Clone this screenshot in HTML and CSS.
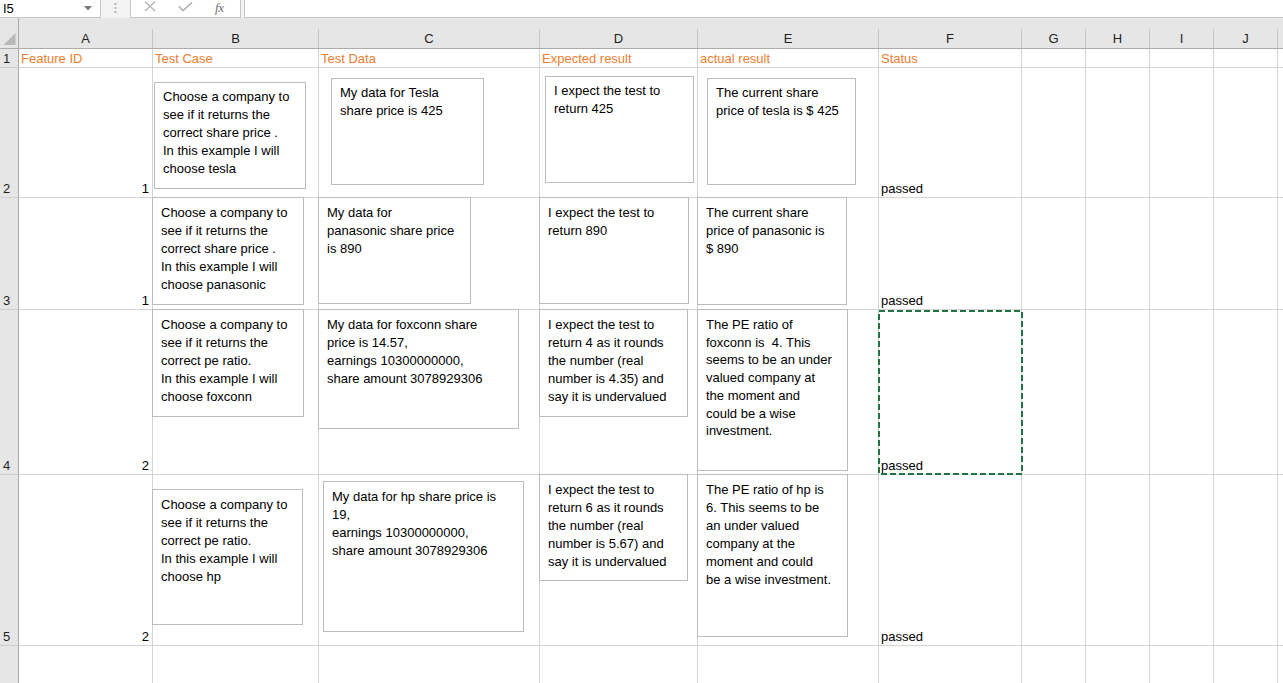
FILE: index.html
```html
<!DOCTYPE html>
<html lang="en">
<head>
<meta charset="utf-8">
<title>Test cases</title>
<link rel="stylesheet" href="styles.css">
</head>
<body>
<div class="app">
  <div class="fbar">
    <div class="namebox">
      <span>I5</span>
      <svg class="dd" width="8" height="5" viewBox="0 0 8 5"><path d="M0 0H8L4 4.5Z" fill="#7a7a7a"/></svg>
    </div>
    <div class="grip">
      <svg width="3" height="11" viewBox="0 0 3 11"><rect x="0.5" y="1" width="2" height="2" fill="#b5b5b5"/><rect x="0.5" y="5" width="2" height="2" fill="#b5b5b5"/><rect x="0.5" y="9" width="2" height="2" fill="#b5b5b5"/></svg>
    </div>
    <div class="fxbox">
      <svg class="ic-x" width="12" height="11" viewBox="0 0 12 11"><path d="M1 0.5L11 10M11 0.5L1 10" stroke="#b3b3b3" stroke-width="1.3" fill="none"/></svg>
      <svg class="ic-ok" width="15" height="10" viewBox="0 0 15 10"><path d="M0.8 4.2L5 8.6L14 0.6" stroke="#b3b3b3" stroke-width="1.6" fill="none"/></svg>
      <span class="fx">fx</span>
    </div>
    <div class="finput"></div>
  </div>

  <div class="sheet">
    <div class="corner"><svg width="19" height="30" viewBox="0 0 19 30"><path d="M15.5 15V27H3.5Z" fill="#b8b8b8"/></svg></div>
    <div class="ch"><span>A</span></div>
    <div class="ch"><span>B</span></div>
    <div class="ch"><span>C</span></div>
    <div class="ch"><span>D</span></div>
    <div class="ch"><span>E</span></div>
    <div class="ch"><span>F</span></div>
    <div class="ch"><span>G</span></div>
    <div class="ch"><span>H</span></div>
    <div class="ch"><span>I</span></div>
    <div class="ch"><span>J</span></div>
    <div class="ch"><span></span></div>

    <div class="rh">1</div>
    <div class="c head">Feature ID</div>
    <div class="c head">Test Case</div>
    <div class="c head">Test Data</div>
    <div class="c head">Expected result</div>
    <div class="c head">actual result</div>
    <div class="c head">Status</div>
    <div class="c"></div><div class="c"></div><div class="c"></div><div class="c"></div><div class="c"></div>

    <div class="rh">2</div>
    <div class="c num">1</div>
    <div class="c"></div><div class="c"></div><div class="c"></div><div class="c"></div>
    <div class="c">passed</div>
    <div class="c"></div><div class="c"></div><div class="c"></div><div class="c"></div><div class="c"></div>

    <div class="rh">3</div>
    <div class="c num">1</div>
    <div class="c"></div><div class="c"></div><div class="c"></div><div class="c"></div>
    <div class="c">passed</div>
    <div class="c"></div><div class="c"></div><div class="c"></div><div class="c"></div><div class="c"></div>

    <div class="rh">4</div>
    <div class="c num">2</div>
    <div class="c"></div><div class="c"></div><div class="c"></div><div class="c"></div>
    <div class="c sel">passed
      <svg class="marquee" width="145" height="165" viewBox="0 0 145 165"><rect x="1" y="1" width="143" height="163" fill="none" stroke="#217346" stroke-width="2" stroke-dasharray="6 3"/></svg>
    </div>
    <div class="c"></div><div class="c"></div><div class="c"></div><div class="c"></div><div class="c"></div>

    <div class="rh">5</div>
    <div class="c num">2</div>
    <div class="c"></div><div class="c"></div><div class="c"></div><div class="c"></div>
    <div class="c">passed</div>
    <div class="c"></div><div class="c"></div><div class="c"></div><div class="c"></div><div class="c"></div>

    <div class="rh"></div>
    <div class="c"></div><div class="c"></div><div class="c"></div><div class="c"></div><div class="c"></div>
    <div class="c"></div><div class="c"></div><div class="c"></div><div class="c"></div><div class="c"></div><div class="c"></div>
  </div>

  <div class="shape s-b2">Choose a company to<br>see if it returns the<br>correct share price .<br>In this example I will<br>choose tesla</div>
  <div class="shape s-c2">My data for Tesla<br>share price is 425</div>
  <div class="shape s-d2">I expect the test to<br>return 425</div>
  <div class="shape s-e2">The current share<br>price of tesla is $ 425</div>

  <div class="shape s-b3">Choose a company to<br>see if it returns the<br>correct share price .<br>In this example I will<br>choose panasonic</div>
  <div class="shape s-c3">My data for<br>panasonic share price<br>is 890</div>
  <div class="shape s-d3">I expect the test to<br>return 890</div>
  <div class="shape s-e3">The current share<br>price of panasonic is<br>$ 890</div>

  <div class="shape s-b4">Choose a company to<br>see if it returns the<br>correct pe ratio.<br>In this example I will<br>choose foxconn</div>
  <div class="shape s-c4">My data for foxconn share<br>price is 14.57,<br>earnings 10300000000,<br>share amount 3078929306</div>
  <div class="shape s-d4">I expect the test to<br>return 4 as it rounds<br>the number (real<br>number is 4.35) and<br>say it is undervalued</div>
  <div class="shape s-e4">The PE ratio of<br>foxconn is&nbsp; 4. This<br>seems to be an under<br>valued company at<br>the moment and<br>could be a wise<br>investment.</div>

  <div class="shape s-b5">Choose a company to<br>see if it returns the<br>correct pe ratio.<br>In this example I will<br>choose hp</div>
  <div class="shape s-c5">My data for hp share price is<br>19,<br>earnings 10300000000,<br>share amount 3078929306</div>
  <div class="shape s-d5">I expect the test to<br>return 6 as it rounds<br>the number (real<br>number is 5.67) and<br>say it is undervalued</div>
  <div class="shape s-e5">The PE ratio of hp is<br>6. This seems to be<br>an under valued<br>company at the<br>moment and could<br>be a wise investment.</div>
</div>
</body>
</html>
```

FILE: styles.css
```css
* { box-sizing: border-box; }

body {
  margin: 0;
  background: #fff;
  color: #000;
  font-family: "Liberation Sans", Arial, sans-serif;
  font-size: 13px;
  overflow: hidden;
}

.app {
  position: relative;
  width: 1283px;
  height: 683px;
  overflow: hidden;
}

/* formula bar */
.fbar {
  display: flex;
  height: 18px;
  background: #f3f3f3;
}

.namebox {
  width: 101px;
  display: flex;
  align-items: center;
  justify-content: space-between;
  padding: 0 8px 0 3px;
  background: #fff;
  border-right: 1px solid #c6c6c6;
  border-bottom: 1px solid #c6c6c6;
  line-height: 16px;
}

.grip {
  width: 29px;
  display: flex;
  align-items: center;
  justify-content: center;
  padding-bottom: 3px;
}

.fxbox {
  width: 111px;
  display: flex;
  align-items: center;
  padding-left: 13px;
  gap: 21px;
  background: #fff;
  border-left: 1px solid #c6c6c6;
  border-right: 1px solid #c6c6c6;
  border-bottom: 1px solid #c6c6c6;
}

.ic-x { margin-top: -5px; }
.ic-ok { margin-top: -3px; margin-left: 1px; }

.fx {
  font-family: "Liberation Serif", "Times New Roman", serif;
  font-style: italic;
  font-size: 13px;
  line-height: 14px;
  color: #6f6f6f;
  margin-top: -2px;
  margin-left: 1px;
  letter-spacing: -0.3px;
}

.finput {
  flex: 1;
  margin-left: 3px;
  background: #fff;
  border-left: 1px solid #c6c6c6;
  border-bottom: 1px solid #c6c6c6;
}

/* sheet grid */
.sheet {
  display: grid;
  grid-template-columns: 19px 134px 166px 221px 158px 181px 143px 64px 64px 64px 64px 1fr;
  grid-template-rows: 31px 19px 130px 112px 165px 171px 1fr;
  height: 690px;
  background: #fff;
}

.corner {
  background: #e6e6e6;
  border-right: 1px solid #ababab;
  border-bottom: 1px solid #ababab;
}
.corner svg { display: block; }

.ch {
  background: #e6e6e6;
  border-bottom: 1px solid #ababab;
  padding-top: 11px;
}

.ch span {
  display: flex;
  height: 19px;
  align-items: center;
  justify-content: center;
  border-right: 1px solid #c6c6c6;
  color: #1e1e1e;
}

.rh {
  background: #e6e6e6;
  border-right: 1px solid #ababab;
  border-bottom: 1px solid #cfcfcf;
  display: flex;
  align-items: flex-end;
  padding: 0 0 0 3px;
  line-height: 16px;
  color: #1e1e1e;
}

.c {
  border-right: 1px solid #d4d4d4;
  border-bottom: 1px solid #d4d4d4;
  display: flex;
  align-items: flex-end;
  padding: 0 3px 0 2px;
  line-height: 16px;
  white-space: nowrap;
}

.c.head { color: #ed7d31; }
.c.num { justify-content: flex-end; }

.c.sel { position: relative; }

.marquee {
  position: absolute;
  left: -1px;
  top: 0;
}

/* floating text boxes (shapes on the sheet canvas) */
.shape {
  position: absolute;
  background: #fff;
  border: 1px solid #bcbcbc;
  padding: 5px 4px 0 8px;
  line-height: 18px;
  white-space: nowrap;
}

.s-b2 { left: 154px; top: 82px;  width: 152px; height: 107px; }
.s-c2 { left: 331px; top: 78px;  width: 153px; height: 107px; }
.s-d2 { left: 545px; top: 76px;  width: 149px; height: 107px; }
.s-e2 { left: 707px; top: 78px;  width: 149px; height: 107px; }

.s-b3 { left: 152px; top: 197px; width: 152px; height: 108px; padding-top: 6px; }
.s-c3 { left: 318px; top: 197px; width: 153px; height: 107px; padding-top: 6px; }
.s-d3 { left: 539px; top: 197px; width: 150px; height: 107px; padding-top: 6px; }
.s-e3 { left: 697px; top: 197px; width: 150px; height: 108px; padding-top: 6px; }

.s-b4 { left: 152px; top: 309px; width: 152px; height: 108px; padding-top: 6px; }
.s-c4 { left: 318px; top: 309px; width: 201px; height: 120px; padding-top: 6px; }
.s-d4 { left: 539px; top: 309px; width: 149px; height: 108px; padding-top: 6px; }
.s-e4 { left: 697px; top: 309px; width: 151px; height: 162px; padding-top: 6px; line-height: 17.7px; }

.s-b5 { left: 152px; top: 489px; width: 151px; height: 136px; padding-top: 6px; }
.s-c5 { left: 323px; top: 481px; width: 201px; height: 151px; padding-top: 6px; }
.s-d5 { left: 539px; top: 474px; width: 149px; height: 107px; padding-top: 6px; }
.s-e5 { left: 697px; top: 474px; width: 151px; height: 163px; padding-top: 6px; }
```
